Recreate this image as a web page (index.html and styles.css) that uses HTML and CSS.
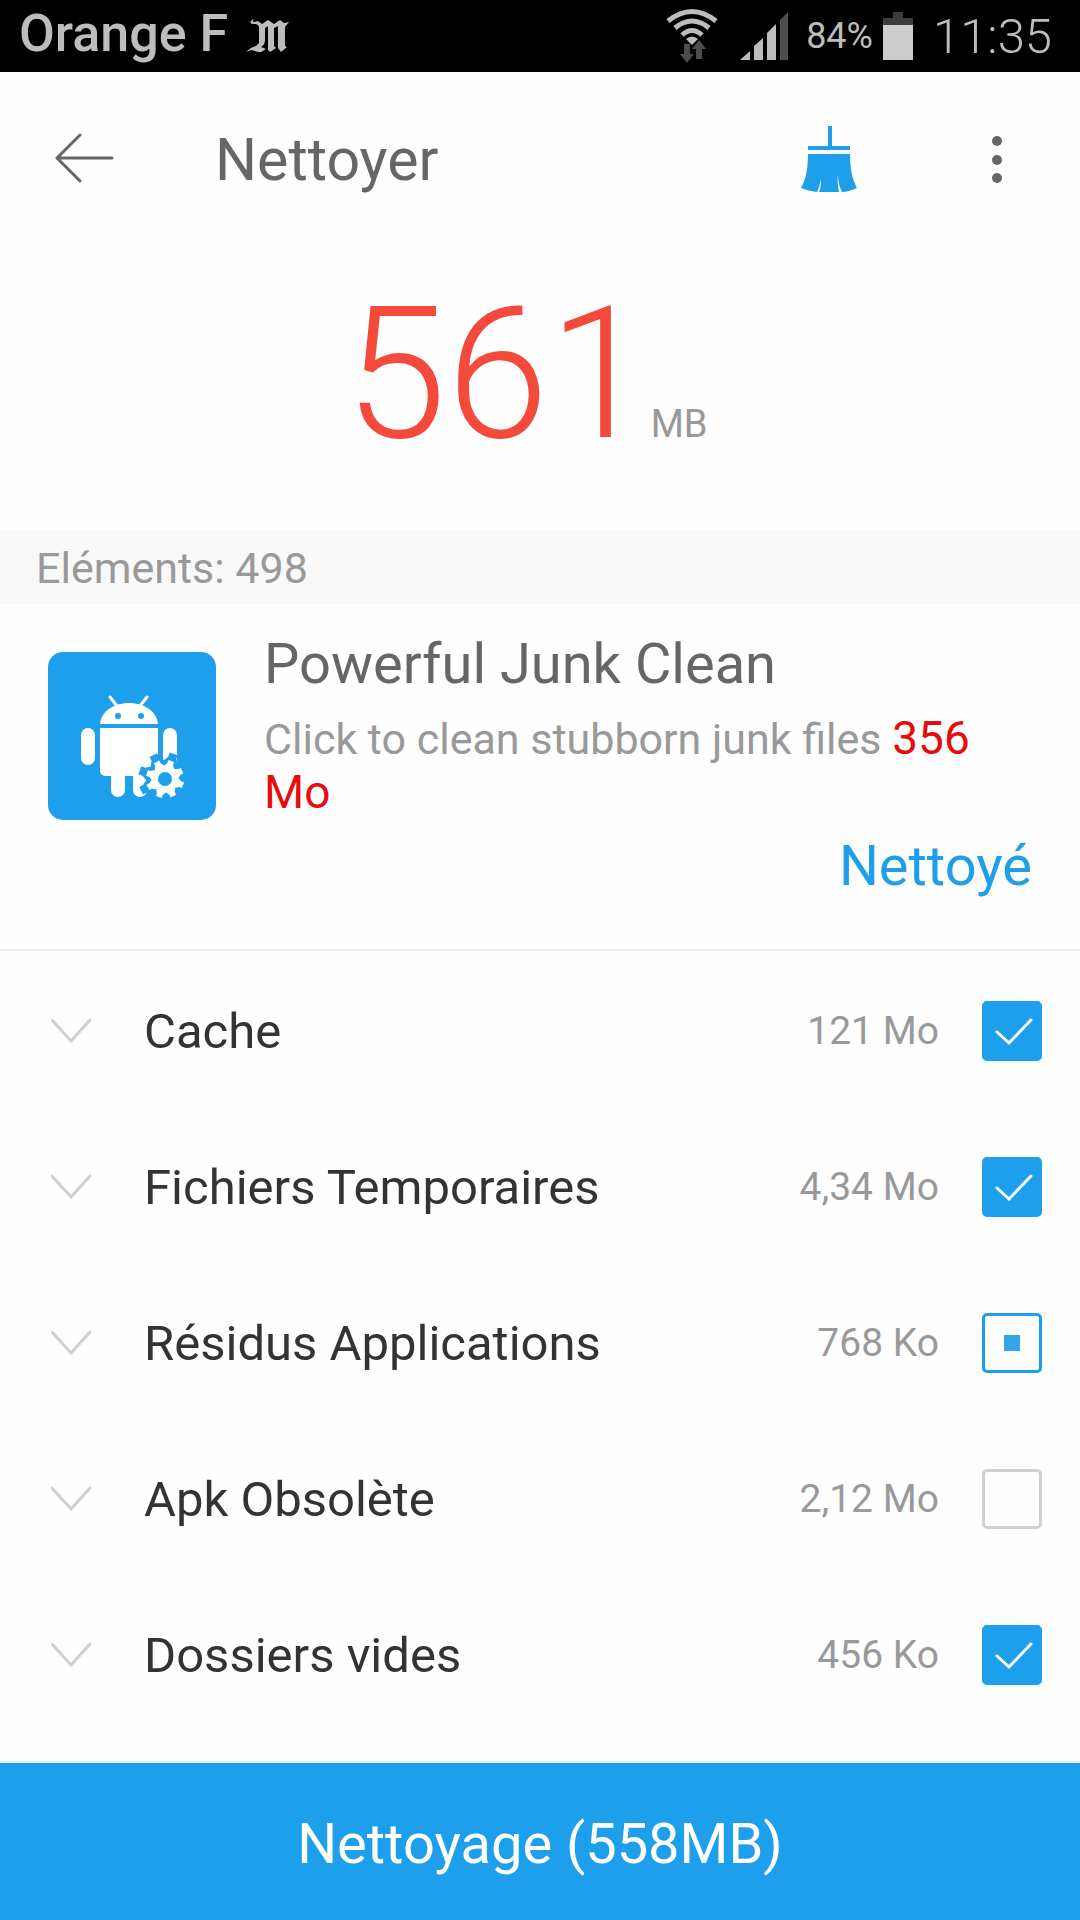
FILE: index.html
```html
<!DOCTYPE html>
<html lang="fr">
<head>
<meta charset="utf-8">
<meta name="viewport" content="width=device-width, initial-scale=1">
<title>Nettoyer</title>
<link rel="stylesheet" href="styles.css">
</head>
<body>
<div class="status">
  <span class="carrier">Orange F</span>
  <svg class="news-icon" width="44" height="36" viewBox="0 0 44 36" aria-hidden="true">
    <path d="M8 1c-4 1-5 5-1 5 3 0 5 0 6 3v16l-3 3c-4 1-7 3-10 6 4-2 6-2 9-1 3 1 5 2 8 0l3-2-5-2c3-2 4-4 4-7V10l3-2v24l2 2 6-4-2-2V10l4-2v22l3 4 6-5-2-1V9l4-5-5 1-4-3-6 4-6-4-6 4-4-3-4 1c-2 0-1-2 0-3z" fill="#bdbdbd"/>
  </svg>
  <span class="spacer"></span>
  <svg class="wifi" width="52" height="56" viewBox="0 0 52 56" aria-hidden="true">
    <g fill="none" stroke="#bdbdbd" stroke-width="5">
      <path d="M2 13Q26-6 50 13"/>
      <path d="M9 20Q26 6 43 20"/>
      <path d="M16 27Q26 18 36 27"/>
    </g>
    <path d="M20 31q6-5 12 0l-6 6z" fill="#bdbdbd"/>
    <path d="M18 36h6v10h4l-7 9-7-9h4zM30 51h6V41h4l-7-9-7 9h4z" fill="#4d4d4d"/>
  </svg>
  <svg class="signal" width="48" height="48" viewBox="0 0 48 48" aria-hidden="true">
    <path d="M0 48l10-9v9zM14 34l9-8v22h-9zM27 21l9-9v36h-9z" fill="#bdbdbd"/>
    <path d="M40 8l8-8v48h-8z" fill="#4d4d4d"/>
  </svg>
  <span class="percent">84%</span>
  <svg class="battery" width="30" height="48" viewBox="0 0 30 48" aria-hidden="true">
    <path d="M10 0h10v6h10v7H0V6h10z" fill="#3c3c3c"/>
    <path d="M0 13h30v35H0z" fill="#cdcdcd"/>
  </svg>
  <time class="clock">11:35</time>
</div>

<header class="appbar">
  <button class="icon-button" aria-label="Retour">
    <svg width="60" height="52" viewBox="0 0 60 52">
      <path d="M58 25H3M26 2L3 25l23 23" fill="none" stroke="#666" stroke-width="3" stroke-linecap="round" stroke-linejoin="round"/>
    </svg>
  </button>
  <h1 class="title">Nettoyer</h1>
  <button class="icon-button" aria-label="Nettoyage rapide">
    <svg width="58" height="68" viewBox="0 0 58 68">
      <path d="M28 1h4v20h18v4H8v-4h20zM8 29h42c0 14 2 25 7 34-5 2-10 4-15 4-3-6-4-11-4-18-1 7 0 12 1 18H19c2-5 2-8 2-13-1 5-2 9-4 13-6-1-11-2-16-4 5-9 7-20 7-34z" fill="#1e9fec"/>
    </svg>
  </button>
  <button class="icon-button menu" aria-label="Menu">
    <svg width="10" height="50" viewBox="0 0 10 50">
      <g fill="#666"><circle cx="5" cy="7" r="5"/><circle cx="5" cy="26" r="5"/><circle cx="5" cy="44" r="5"/></g>
    </svg>
  </button>
</header>

<main class="content">
  <section class="total">
    <span class="amount">561</span>
    <span class="unit">MB</span>
  </section>
  <p class="count">Eléments: 498</p>

  <section class="promo">
    <svg class="promo-icon" width="168" height="168" viewBox="0 0 168 168" aria-hidden="true">
      <defs>
        <g id="gear">
          <circle r="13"/>
          <path id="tooth" d="M-6-11l3-5v-3h6v3l3 5z"/>
          <use href="#tooth" transform="rotate(45)"/>
          <use href="#tooth" transform="rotate(90)"/>
          <use href="#tooth" transform="rotate(135)"/>
          <use href="#tooth" transform="rotate(180)"/>
          <use href="#tooth" transform="rotate(225)"/>
          <use href="#tooth" transform="rotate(270)"/>
          <use href="#tooth" transform="rotate(315)"/>
        </g>
      </defs>
      <rect width="168" height="168" rx="15" fill="#1e9fec"/>
      <g fill="#fff">
        <path d="M52 72c1-12 13-21 29-21s28 9 29 21z"/>
        <path d="M52 76h58v48H57a5 5 0 0 1-5-5z"/>
        <rect x="33" y="76" width="14" height="37" rx="7"/>
        <rect x="115" y="76" width="14" height="37" rx="7"/>
        <path d="M63 122h14v16a7 7 0 0 1-14 0zM85 122h14v16a7 7 0 0 1-14 0z"/>
      </g>
      <path d="M62 45l7 9M99 45l-7 9" stroke="#fff" stroke-width="3" stroke-linecap="round"/>
      <circle cx="70" cy="64" r="3" fill="#1e9fec"/>
      <circle cx="93" cy="64" r="3" fill="#1e9fec"/>
      <g transform="translate(117 127)">
        <use href="#gear" fill="#1e9fec" transform="rotate(-26) scale(1.4)"/>
        <use href="#gear" fill="#fff" transform="rotate(-26)"/>
        <circle r="7" fill="#1e9fec"/>
      </g>
    </svg>
    <div class="promo-body">
      <h2 class="promo-title">Powerful Junk Clean</h2>
      <p class="promo-text">Click to clean stubborn junk files <strong class="alert">356 Mo</strong></p>
      <button class="promo-action">Nettoyé</button>
    </div>
  </section>

  <ul class="list">
    <li class="row">
      <button class="expand" aria-label="Développer Cache"><svg width="40" height="26" viewBox="0 0 40 26"><path d="M1 2l19 21L39 2"/></svg></button>
      <label class="name" for="cache">Cache</label>
      <span class="size">121 Mo</span>
      <input class="check" type="checkbox" id="cache" checked>
    </li>
    <li class="row">
      <button class="expand" aria-label="Développer Fichiers Temporaires"><svg width="40" height="26" viewBox="0 0 40 26"><path d="M1 2l19 21L39 2"/></svg></button>
      <label class="name" for="temp">Fichiers Temporaires</label>
      <span class="size">4,34 Mo</span>
      <input class="check" type="checkbox" id="temp" checked>
    </li>
    <li class="row">
      <button class="expand" aria-label="Développer Résidus Applications"><svg width="40" height="26" viewBox="0 0 40 26"><path d="M1 2l19 21L39 2"/></svg></button>
      <label class="name" for="residus">Résidus Applications</label>
      <span class="size">768 Ko</span>
      <input class="check partial" type="checkbox" id="residus" aria-checked="mixed">
    </li>
    <li class="row">
      <button class="expand" aria-label="Développer Apk Obsolète"><svg width="40" height="26" viewBox="0 0 40 26"><path d="M1 2l19 21L39 2"/></svg></button>
      <label class="name" for="apk">Apk Obsolète</label>
      <span class="size">2,12 Mo</span>
      <input class="check" type="checkbox" id="apk">
    </li>
    <li class="row">
      <button class="expand" aria-label="Développer Dossiers vides"><svg width="40" height="26" viewBox="0 0 40 26"><path d="M1 2l19 21L39 2"/></svg></button>
      <label class="name" for="vides">Dossiers vides</label>
      <span class="size">456 Ko</span>
      <input class="check" type="checkbox" id="vides" checked>
    </li>
  </ul>
</main>

<button class="clean">Nettoyage (558MB)</button>
</body>
</html>
```
FILE: styles.css
```css
* {
  box-sizing: border-box;
}

body {
  margin: 0;
  min-height: 100vh;
  display: flex;
  flex-direction: column;
  background: #fefefe;
  color: #666;
  font-family: Roboto, "Liberation Sans", sans-serif;
}

h1, h2, p, ul {
  margin: 0;
  padding: 0;
  font-weight: 400;
}

button {
  margin: 0;
  padding: 0;
  border: 0;
  background: none;
  font: inherit;
}

svg {
  display: block;
  flex: none;
}

/* Phone status bar */
.status {
  display: flex;
  align-items: center;
  height: 72px;
  padding: 0 28px 0 19px;
  background: #000;
  color: #bdbdbd;
}

.carrier {
  padding-bottom: 4px;
  font-size: 52px;
  line-height: 64px;
  font-weight: 500;
}

.news-icon {
  margin-left: 18px;
}

.spacer {
  flex: 1;
}

.signal {
  margin-left: 22px;
}

.percent {
  margin: 0 10px 0 18px;
  font-size: 36px;
}

.clock {
  margin-left: 20px;
  font-size: 49px;
  font-weight: 350;
}

/* App bar */
.appbar {
  display: flex;
  align-items: center;
  height: 174px;
  padding: 0 78px 0 54px;
}

.icon-button {
  flex: none;
}

.title {
  flex: 1;
  margin-left: 101px;
  font-size: 59px;
}

.menu {
  margin-left: 134px;
}

.content {
  flex: 1;
}

/* Total found */
.total {
  display: flex;
  justify-content: center;
  align-items: baseline;
  height: 283px;
  padding: 18px 28px 0 0;
}

.amount {
  color: #f34a3c;
  font-size: 184px;
  font-weight: 350;
  line-height: 220px;
}

.unit {
  color: #999;
  font-size: 38px;
}

.count {
  padding: 3px 36px 0;
  background: #f9f9f9;
  color: #999;
  font-size: 43px;
  line-height: 72px;
}

/* Promo card */
.promo {
  display: flex;
  gap: 48px;
  padding: 24px 48px 49px;
  border-bottom: 2px solid #eee;
}

.promo-icon {
  margin-top: 24px;
}

.promo-body {
  flex: 1;
  display: flex;
  flex-direction: column;
  gap: 12px;
}

.promo-title {
  font-size: 56px;
  line-height: 72px;
}

.promo-text {
  color: #999;
  font-size: 43px;
  line-height: 54px;
}

.alert {
  color: #e60c0c;
  font-size: 46px;
  font-weight: 400;
  line-height: 1;
}

.promo-action {
  align-self: flex-end;
  color: #1e9fec;
  font-size: 56px;
  line-height: 68px;
}

/* Categories */
.list {
  padding-top: 2px;
  list-style: none;
}

.row {
  display: flex;
  align-items: center;
  height: 156px;
  padding: 0 38px 0 51px;
}

.expand path {
  fill: none;
  stroke: #d0d0d0;
  stroke-width: 3;
  stroke-linecap: round;
}

.name {
  flex: 1;
  margin-left: 53px;
  color: #333;
  font-size: 49px;
}

.size {
  margin-right: 43px;
  color: #999;
  font-size: 39px;
}

.check {
  appearance: none;
  flex: none;
  width: 60px;
  height: 60px;
  margin: 0;
  border: 3px solid #d0d0d0;
  border-radius: 5px;
}

.check:checked {
  border-color: #1e9fec;
  background: #1e9fec url("data:image/svg+xml,%3Csvg xmlns='http://www.w3.org/2000/svg' viewBox='0 0 60 60'%3E%3Cpath d='M15 31l12 11 22-23' fill='none' stroke='white' stroke-width='3' stroke-linecap='round'/%3E%3C/svg%3E") center / 60px 60px no-repeat;
}

.partial {
  border-color: #1e9fec;
  background: linear-gradient(#34a5e8, #34a5e8) center / 16px 16px no-repeat;
}

/* Bottom action */
.clean {
  height: 159px;
  padding-top: 4px;
  border-top: 2px solid #eee;
  background: #1e9fec;
  color: #fff;
  font-size: 56px;
}
```
